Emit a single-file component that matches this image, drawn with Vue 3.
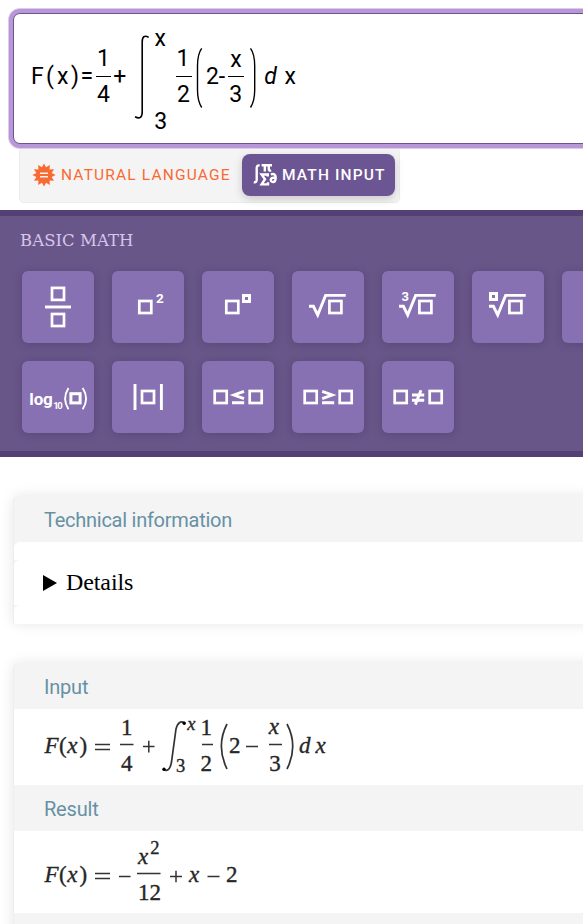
<script setup>
const root = 'M17 35.3H21.4L25.7 44L33.6 24.4H53.7'
const squares = (list) => list.map(([x, y, w = 12, s = 2.7]) => ({ x: x - w / 2, y: y - w / 2, w, s }))

const keys = [
  { name: 'Fraction', sq: squares([[36, 22.9], [36, 49]]), d: 'M23 36H49' },
  { name: 'Square', sq: squares([[33.3, 36]]), texts: [{ t: '2', x: 44, y: 32.3, s: 13.5 }] },
  { name: 'Power', sq: squares([[30.3, 36], [44.5, 27.5, 6, 3]]) },
  { name: 'Square root', sq: squares([[43.4, 36]]), d: root },
  { name: 'Cube root', sq: squares([[43.4, 36]]), d: root, texts: [{ t: '3', x: 19.4, y: 30, s: 13 }] },
  { name: 'Nth root', sq: squares([[43.4, 36], [21.5, 25.5, 6, 3]]), d: root },
  { name: 'More', sq: [] },
  {
    name: 'Logarithm',
    sq: squares([[53.5, 37.3, 9.2, 3]]),
    thin: 'M46.5 27Q39.8 37.5 46.5 48.3M60.7 27Q67.4 37.5 60.7 48.3',
    texts: [{ t: 'log', x: 7.3, y: 43.6, s: 17, w: 23.5 }, { t: '10', x: 31.3, y: 48, s: 9.5, w: 9.4 }],
  },
  { name: 'Absolute value', sq: squares([[36, 36]]), d: 'M23 23V49M49.4 23V49' },
  { name: 'Less or equal', sq: squares([[18.7, 36], [53.7, 36]]), d: 'M42 30.4L32 34L42 37.6M30 41.7H42.2' },
  { name: 'Greater or equal', sq: squares([[18.7, 36], [53.7, 36]]), d: 'M30.2 30.4L40.2 34L30.2 37.6M30 41.7H42.2' },
  { name: 'Not equal', sq: squares([[18.7, 36], [53.7, 36]]), d: 'M30 34H42.2M30 39.3H42.2M39 29.3L33.3 43.6' },
]
const rays = Array.from({ length: 24 }, (_, i) => {
  const a = (i * Math.PI) / 12
  const r = i % 2 ? 7.9 : 11.6
  return `${12 + r * Math.sin(a)},${12 - r * Math.cos(a)}`
}).join(' ')
</script>

<template>
  <main class="page">
    <section class="editor">
      <svg class="formula" width="569" height="129" viewBox="14 14 569 129">
        <g class="typed">
          <text x="31" y="84">F</text><text x="46" y="84">(</text><text x="56.9" y="84">x</text>
          <text x="71" y="84">)</text><text x="80.6" y="84">=</text>
          <text x="97" y="66">1</text><text x="97.1" y="102">4</text><text x="113.3" y="84">+</text>
          <text x="154.4" y="46">x</text><text x="154.3" y="129">3</text>
          <text x="176.6" y="66">1</text><text x="177" y="102">2</text>
          <text x="206" y="84">2</text><text x="218.7" y="84">-</text>
          <text x="230.2" y="67">x</text><text x="229.2" y="102">3</text>
          <text x="264.2" y="84" class="it">d</text><text x="284.5" y="84">x</text>
        </g>
        <path class="rule" d="M96 76.5H111M176 76.5H192M228 76.5H244" />
        <path class="curve" d="M148.7 37.4Q142.2 33.8 142.2 42V112Q142.2 120.5 135 116.7" />
        <path class="curve thin" d="M201.7 48.3Q197.5 54 197.5 66V90Q197.5 101 201.7 107.5M250.5 48.3Q254.7 54 254.7 66V90Q254.7 101 250.5 107.5" />
      </svg>
    </section>

    <nav class="modes">
      <button class="mode natural">
        <svg width="24" height="24" viewBox="0 0 24 24">
          <polygon :points="rays" fill="#f96a32" />
          <path d="M8 10.2H16M8 13.8H16" stroke="#f4f4f4" stroke-width="1.5" />
        </svg>
        <span>NATURAL LANGUAGE</span>
      </button>
      <button class="mode math">
        <svg width="26" height="26" viewBox="0 0 26 26">
          <path d="M6.6 3.6Q3.7 2.8 3.7 6.2V17.6Q3.7 21 .8 20.1" />
          <path d="M8.6 3.2H19M11.8 3.4V9.4M15.8 3.4V7.2Q15.8 9 18.2 8.5" />
          <path d="M14.8 14.4V12.5H8.6L12 17.2L8.6 22.4H15V20.2" />
          <path d="M17.8 12.4Q22.8 10.8 22.7 15.6Q22.6 20 20 20Q17.6 19.8 17.8 17.6Q18.2 15.2 22.4 15.9" />
        </svg>
        <span>MATH INPUT</span>
      </button>
    </nav>

    <section class="keyboard">
      <h2>BASIC MATH</h2>
      <div class="keys">
        <button v-for="k in keys" :key="k.name" class="key">
          <svg width="72" height="72" viewBox="0 0 72 72">
            <rect v-for="(q, i) in k.sq" :key="i" :x="q.x" :y="q.y" :width="q.w" :height="q.w" :stroke-width="q.s" />
            <path v-if="k.d" :d="k.d" stroke-width="2.9" />
            <path v-if="k.thin" :d="k.thin" stroke-width="1.9" />
            <text v-for="t in k.texts" :key="t.t" :x="t.x" :y="t.y" :font-size="t.s" :textLength="t.w">{{ t.t }}</text>
          </svg>
        </button>
      </div>
    </section>

    <section class="card technical">
      <h3>Technical information</h3>
      <div class="strip pad"></div>
      <div class="strip details"><span class="arrow"></span>Details</div>
      <div class="strip end"></div>
    </section>

    <section class="card results">
      <h3 class="wide">Input</h3>
      <div class="pod">
        <svg width="569" height="76" viewBox="14 709 569 76">
          <g class="set">
            <text x="44.5" y="753" class="it">F</text><text x="59" y="753">(</text><text x="67.3" y="753" class="it">x</text><text x="79.5" y="753">)</text>
            <text x="121" y="734.5">1</text><text x="121" y="770.5">4</text>
            <text x="187.3" y="730" class="it small">x</text><text x="176" y="772" class="small">3</text>
            <text x="200.5" y="734.5">1</text><text x="200.5" y="770.5">2</text>
            <text x="229" y="752.5">2</text>
            <text x="268.8" y="733.8" class="it">x</text><text x="269.3" y="770.5">3</text>
            <text x="299" y="753" class="it">d</text><text x="315.5" y="753" class="it">x</text>
          </g>
          <path class="ink" d="M95 744.5H110M95 749.5H110M120 744.5H133.5M143 746.5H154.5M148.8 740.8V752.4M202 744.5H213M246 746.5H258M269 744.5H282" />
          <path class="inkcurve" d="M184.5 722.8Q178.5 719.5 176 729L171.5 762Q169.5 773 163.4 769.6" />
          <circle cx="184.2" cy="723.3" r="1.7" /><circle cx="164" cy="769.3" r="1.7" />
          <path class="inkcurve" d="M227 724Q215.7 746 227 769M287 724Q298.5 746 287 769" />
        </svg>
      </div>
      <h3 class="wide">Result</h3>
      <div class="pod result">
        <svg width="569" height="82" viewBox="14 831 569 82">
          <g class="set">
            <text x="44.5" y="882" class="it">F</text><text x="59" y="882">(</text><text x="67.3" y="882" class="it">x</text><text x="79.5" y="882">)</text>
            <text x="138" y="864" class="it">x</text><text x="150.3" y="853.5" class="small">2</text>
            <text x="138" y="900">12</text>
            <text x="189" y="882" class="it">x</text><text x="226" y="882">2</text>
          </g>
          <path class="ink" d="M95 873.5H110M95 878.5H110M119 876.5H130.5M137 873.5H160.5M170 876.5H182M176 870.7V882.3M207.5 876.5H219.5" />
        </svg>
      </div>
      <div class="next"></div>
    </section>
  </main>
</template>

<style>
body { overflow: hidden; background: #fff; }
</style>

<style scoped>
.page { width: 583px; height: 924px; overflow: hidden; background: #fff; font-family: Roboto, sans-serif; }
.page * { box-sizing: border-box; }
svg { display: block; flex: none; }
button { border: 0; margin: 0; padding: 0; font-family: inherit; }
.editor { position: relative; z-index: 1; margin: 13px 0 0 13px; width: 590px; height: 131px; border: 1px solid #6c548f; border-radius: 7px; background: #fff; box-shadow: 0 0 0 4px #b896d7, 0 0 0 5px #dccceb; }
.typed { font-size: 23px; fill: #000; }
.it { font-style: italic; }
.rule { stroke: #000; stroke-width: 1; }
.curve { fill: none; stroke: #000; stroke-width: 1.6; }
.thin { stroke-width: 1.4; }
.modes { display: flex; align-items: flex-start; margin: 3px 0 0 19px; width: 381px; height: 56px; padding-top: 6px; background: #f4f4f4; border: 1px solid #ececec; border-radius: 5px; }
.mode { display: flex; align-items: center; height: 42px; font-size: 15.5px; font-weight: 400; white-space: nowrap; }
.natural { width: 222px; padding-left: 12px; background: none; color: #f96a32; gap: 5px; letter-spacing: 1.17px; }
.math { width: 153px; padding-left: 11px; border-radius: 8px; background: #6c5593; color: #fff; gap: 3px; letter-spacing: 1.15px; font-weight: 500; box-shadow: 0 3px 8px rgba(0, 0, 0, .18); }
.math path { fill: none; stroke: #fff; stroke-width: 2.4; }
.keyboard { margin-top: 7px; height: 247px; background: #695689; border-top: 6px solid #544074; border-bottom: 6px solid #544074; padding: 15px 0 0 20px; overflow: hidden; }
h2 { margin: 0; height: 40px; font: 400 16.5px/20px "DejaVu Serif", serif; letter-spacing: .05px; color: #d6c5ec; }
.keys { display: grid; grid-template-columns: repeat(7, 72px); gap: 18px; margin-left: 2px; }
.key { width: 72px; height: 72px; border-radius: 6px; background: #8871b2; box-shadow: 0 1px 8px rgba(50, 30, 75, .28); }
.key rect, .key path { fill: none; stroke: #fff; }
.key text { fill: #fff; font-weight: 700; }
.card { margin-left: 13px; width: 590px; border-left: 1px solid #eeeeee; background: #f4f4f4; box-shadow: 0 0 14px rgba(0, 0, 0, .1); }
.technical { margin-top: 39px; height: 128px; border-radius: 6px 0 0 0; }
h3 { margin: 0; height: 46px; padding-left: 30px; font-size: 20px; font-weight: 400; line-height: 49px; letter-spacing: -.26px; color: #6691a5; }
.wide { letter-spacing: -.2px; }
.strip { background: #fff; border-radius: 6px 0 0 0; }
.pad { height: 18px; }
.details { height: 45px; display: flex; align-items: center; padding: 0 0 0 29px; font: 24px/43px "Liberation Serif", serif; letter-spacing: -.1px; color: #000; }
.arrow { border-left: 14px solid #000; border-top: 8px solid transparent; border-bottom: 8px solid transparent; margin-right: 9px; }
.end { height: 19px; }
.results { margin-top: 39px; border-radius: 6px 0 0 0; }
.pod { height: 76px; background: #fff; }
.result { height: 82px; }
.next { height: 30px; }
.set { font-family: "Liberation Serif", serif; font-size: 23px; fill: #262626; stroke: #262626; stroke-width: .35; }
.small { font-size: 18.5px; }
.ink { fill: none; stroke: #333; stroke-width: 1.5; }
.inkcurve { fill: none; stroke: #333; stroke-width: 1.7; }
</style>
